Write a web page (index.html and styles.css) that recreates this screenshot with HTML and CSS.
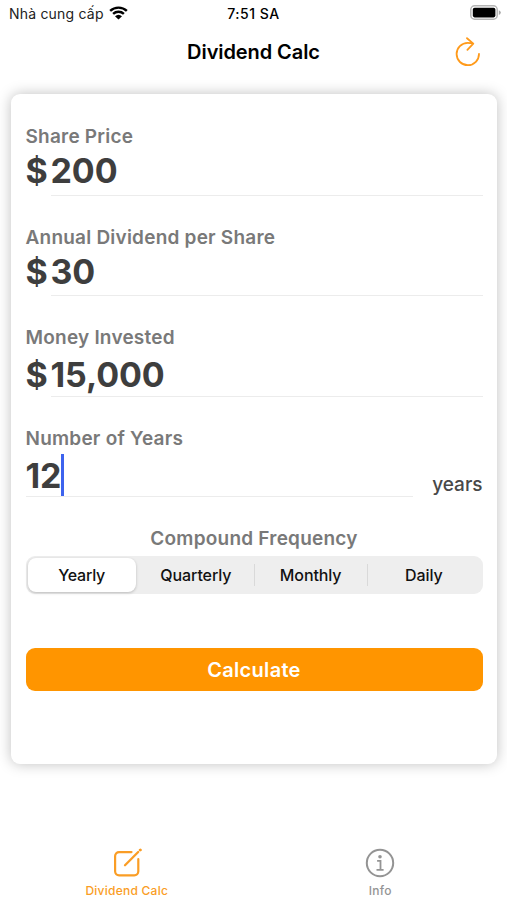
FILE: index.html
```html
<!DOCTYPE html>
<html lang="vi">
<head>
<meta charset="utf-8">
<title>Dividend Calc</title>
<link rel="stylesheet" href="styles.css">
</head>
<body>
<div class="app">
  <div class="status">
    <div class="carrier"><span class="carrier-name">Nhà cung cấp</span>
      <svg class="wifi" viewBox="0 0 18 14" width="19" height="14" preserveAspectRatio="none"><path d="M1.1 4.9a11.4 11.4 0 0 1 15.8 0M3.9 7.8a7.4 7.4 0 0 1 10.2 0" fill="none" stroke="#000" stroke-width="2.3"/><path d="M9 13.6 5.7 10.3a4.8 4.8 0 0 1 6.6 0z"/></svg>
    </div>
    <div class="time">7:51 SA</div>
    <svg class="battery" viewBox="0 0 32 16" width="32" height="16"><rect x=".8" y=".8" width="26.4" height="13.4" rx="3.8" fill="#fff" stroke="#b5b5b5" stroke-width="1.5"/><rect x="2.8" y="2.8" width="22.6" height="9.6" rx="1.8"/><path d="M28.8 5.2q2 .8 2 2.4t-2 2.4z" fill="#aaa"/></svg>
  </div>
  <header class="nav">
    <h1>Dividend Calc</h1>
    <svg class="refresh" viewBox="0 0 26 30" width="26" height="30" fill="none" stroke="#ff9a1a" stroke-width="1.8" stroke-linecap="round" stroke-linejoin="round"><path d="M24 16.8A11.2 11.2 0 1 1 12.8 5.8q2.4 0 5.2.7M12 1.2l6.3 5.4-5.9 6.2"/></svg>
  </header>
  <main class="card">
    <section class="field"><div class="label">Share Price</div><div class="row"><span class="num dollar">$</span><span class="num value">200</span></div></section>
    <section class="field"><div class="label">Annual Dividend per Share</div><div class="row"><span class="num dollar">$</span><span class="num value">30</span></div></section>
    <section class="field low"><div class="label">Money Invested</div><div class="row"><span class="num dollar">$</span><span class="num value">15,000</span></div></section>
    <section class="field lower"><div class="label">Number of Years</div><div class="row"><span class="num value years-value">12<i class="caret"></i></span><span class="unit">years</span></div></section>
    <div class="label frequency">Compound Frequency</div>
    <div class="segments"><span class="seg active">Yearly</span><span class="seg quarterly">Quarterly</span><span class="seg divided">Monthly</span><span class="seg divided">Daily</span></div>
    <div class="calculate">Calculate</div>
  </main>
  <footer class="tabs">
    <div class="tab selected"><svg viewBox="0 0 30 30" width="30" height="30" fill="none" stroke="#fa9d25" stroke-width="2.2" stroke-linecap="round"><path d="M19.5 4.1H7.1a4 4 0 0 0-4 4v15.2a4 4 0 0 0 4 4h15.2a4 4 0 0 0 4-4V11.2"/><path d="M13 17.2 26.2 4" stroke-width="2.3"/><path d="m28.2 2.1.2-.2" stroke-width="2.8"/></svg><span>Dividend Calc</span></div>
    <div class="tab"><svg viewBox="0 0 30 30" width="30" height="30"><circle cx="15" cy="15" r="13.2" fill="none" stroke="#949494" stroke-width="2"/><circle cx="15" cy="8.7" r="1.8" fill="#949494"/><path d="M12.1 12.9h3.4v8.5M11.5 21.9h7.1" fill="none" stroke="#949494" stroke-width="1.8"/></svg><span>Info</span></div>
  </footer>
</div>
</body>
</html>
```
FILE: styles.css
```css
* { box-sizing: border-box; }
body { margin: 0; background: #fff; font-family: Inter, "Liberation Sans", sans-serif; color: #000; }
.app { width: 507px; height: 900px; display: flex; flex-direction: column; overflow: hidden; }
.status { height: 28px; display: grid; grid-template-columns: 1fr auto 1fr; align-items: center; padding: 0 6px 0 9px; flex: none; }
.carrier { display: flex; align-items: center; gap: 5px; font-size: 14px; color: #222; }
.carrier-name { letter-spacing: .2px; margin-top: -1px; }
.wifi { margin-top: -3px; }
.time { font-size: 14px; font-weight: 500; letter-spacing: .55px; margin: -2px 3px 0 0; }
.battery { justify-self: end; margin: -2px -1px 0 0; }
.nav { height: 66px; flex: none; display: grid; grid-template-columns: 1fr auto 1fr; padding: 9px 26px 0; }
.nav h1 { grid-column: 2; margin: 0; font-size: 20px; line-height: 31px; font-weight: 600; letter-spacing: -.08px; }
.refresh { justify-self: end; }
.card { flex: none; margin: 0 10px 0 10.5px; height: 670px; border-radius: 9px; background: #fff; padding: 30px 14.5px 0 15px; box-shadow: 0 0 14px rgba(0,0,0,.25); }
.field { height: 100.6px; }
.label { font-size: 19px; line-height: 25px; height: 24px; font-weight: 600; letter-spacing: .22px; color: #797979; white-space: nowrap; }
.row { display: flex; height: 47.5px; }
.num { font-size: 34px; line-height: 46px; font-weight: 650; letter-spacing: -.1px; color: #3e3e3e; }
.dollar { width: 25px; flex: none; }
.value { flex: 1; border-bottom: 1.5px solid #ececec; }
.low .num { line-height: 51px; }
.lower .num { line-height: 52px; }
.years-value { display: flex; margin-right: 19px; }
.caret { width: 2.3px; height: 42px; margin-top: 4px; background: #3d63ee; }
.unit { font-size: 19px; line-height: 24px; margin-top: 23px; color: #484848; font-weight: 500; }
.frequency { text-align: center; }
.segments { display: grid; grid-template-columns: repeat(4, 1fr); height: 38px; margin-top: 5.5px; border-radius: 9px; background: #eee; padding: 2px; }
.seg { display: flex; align-items: center; justify-content: center; font-size: 16px; font-weight: 500; letter-spacing: -.1px; color: #111; }
.active { background: #fff; border-radius: 8px; margin-right: 5px; box-shadow: 0 1px 3px rgba(0,0,0,.22); font-weight: 550; letter-spacing: -.2px; }
.quarterly { padding-right: 3px; }
.divided { background: linear-gradient(#d9d9d9, #d9d9d9) 0 50% / 1px 22px no-repeat; }
.calculate { height: 43px; margin-top: 54.5px; border-radius: 9px; background: #ff9500; color: #fff; text-align: center; font-size: 20px; font-weight: 600; letter-spacing: .3px; line-height: 44px; }
.tabs { flex: none; display: grid; grid-template-columns: 1fr 1fr; margin-top: 84px; }
.tab { display: flex; flex-direction: column; align-items: center; color: #949494; font-size: 12px; font-weight: 500; letter-spacing: .25px; gap: 5px; line-height: 16px; }
.selected { color: #fa9d25; }
```
